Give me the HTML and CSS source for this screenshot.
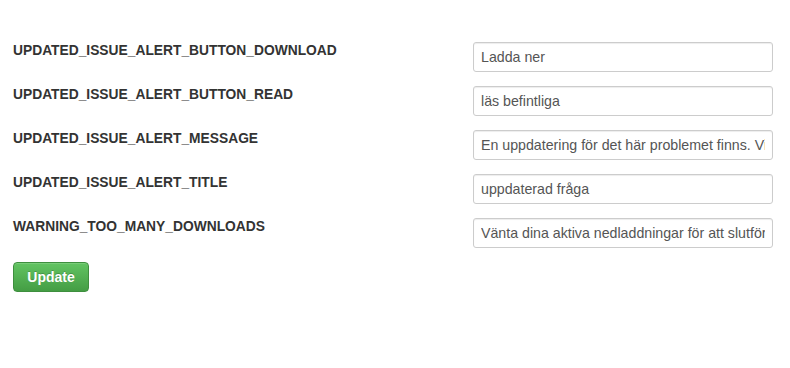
FILE: index.html
```html
<!DOCTYPE html>
<html lang="sv">
  <head>
    <meta charset="UTF-8" />
    <meta name="viewport" content="width=device-width, initial-scale=1.0" />
    <title>Översättningar</title>
    <link rel="stylesheet" href="styles.css">
  </head>
  <body>
    <form class="translate-form">
      <div class="form-row">
        <label class="key-label" for="k1">UPDATED_ISSUE_ALERT_BUTTON_DOWNLOAD</label>
        <input type="text" class="text-input" id="k1" value="Ladda ner" />
      </div>
      <div class="form-row">
        <label class="key-label" for="k2">UPDATED_ISSUE_ALERT_BUTTON_READ</label>
        <input type="text" class="text-input" id="k2" value="läs befintliga" />
      </div>
      <div class="form-row">
        <label class="key-label" for="k3">UPDATED_ISSUE_ALERT_MESSAGE</label>
        <input type="text" class="text-input" id="k3" value="En uppdatering för det här problemet finns. Vill du ladda ner den nu?" />
      </div>
      <div class="form-row">
        <label class="key-label" for="k4">UPDATED_ISSUE_ALERT_TITLE</label>
        <input type="text" class="text-input" id="k4" value="uppdaterad fråga" />
      </div>
      <div class="form-row">
        <label class="key-label" for="k5">WARNING_TOO_MANY_DOWNLOADS</label>
        <input type="text" class="text-input" id="k5" value="Vänta dina aktiva nedladdningar för att slutföra" />
      </div>
      <button type="button" class="btn-update">Update</button>
    </form>
  </body>
</html>
```

FILE: styles.css
```css
body {
  margin: 0;
  padding: 0;
  background: #fff;
  color: #333;
  font-family: "Liberation Sans", Arial, sans-serif;
  font-size: 14px;
}

.translate-form {
  padding: 42px 13px 0 13px;
}

.form-row {
  display: grid;
  grid-template-columns: 460px 300px;
  align-items: start;
  margin-bottom: 14px;
}

.key-label {
  font-weight: bold;
  font-size: 13.8px;
  line-height: 20px;
  margin-top: -1px;
  color: #333;
}

.text-input {
  box-sizing: border-box;
  width: 300px;
  height: 30px;
  padding: 4px 7px;
  font-family: "Liberation Sans", Arial, sans-serif;
  font-size: 14.2px;
  color: #555;
  background: #fff;
  border: 1px solid #ccc;
  border-radius: 3px;
  box-shadow: inset 0 1px 1px rgba(0, 0, 0, 0.075);
  outline: none;
}

.btn-update {
  display: block;
  width: 76px;
  height: 30px;
  padding: 0;
  font-family: "Liberation Sans", Arial, sans-serif;
  font-size: 14px;
  font-weight: bold;
  color: #fff;
  background: linear-gradient(to bottom, #62c462, #449d44);
  border: 1px solid #3e8f3e;
  border-radius: 4px;
  box-shadow: inset 0 1px 0 rgba(255, 255, 255, 0.15);
  text-shadow: 0 -1px 0 rgba(0, 0, 0, 0.2);
}
```
